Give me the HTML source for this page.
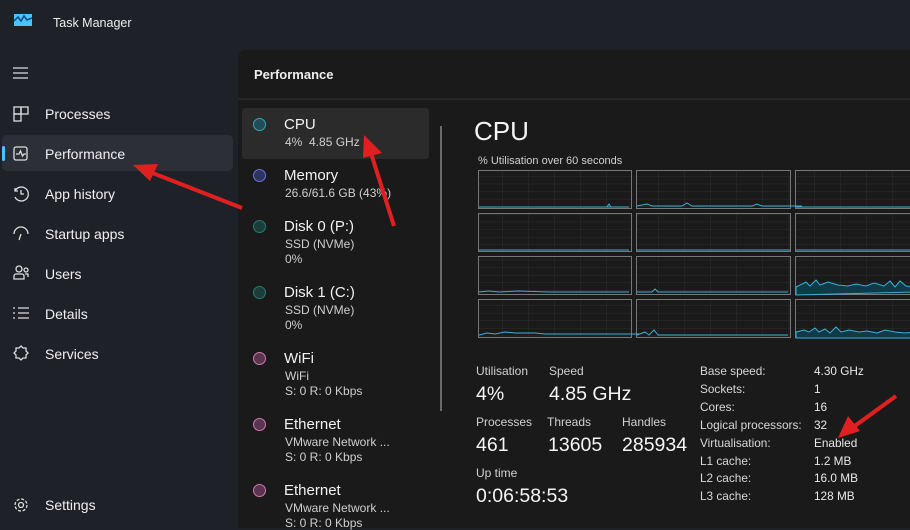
<!DOCTYPE html>
<html><head><meta charset="utf-8"><style>
*{margin:0;padding:0;box-sizing:border-box}
body{width:910px;height:528px;overflow:hidden;background:#1f2129;font-family:"Liberation Sans",sans-serif;color:#fff;position:relative}
.a{position:absolute;white-space:nowrap}
.nav{font-size:14px;color:#f0f0f0}
.panel{position:absolute;left:238px;top:50px;width:672px;height:478px;background:#1a1a1a;border-top-left-radius:8px}
.dot{position:absolute;width:13px;height:13px;border-radius:50%;border:1.5px solid}
.t1{font-size:15px;color:#f2f2f2}
.t2{font-size:12px;color:#cfcfcf}
.lbl{font-size:12px;color:#d0d0d0}
.big{font-size:19.5px;color:#f5f5f5}
.r{font-size:11.8px;color:#e8e8e8}
</style></head><body>
<svg class="a" style="left:14px;top:14px" width="18" height="12"><rect width="18" height="12" fill="#4cc2ff"/><path d="M0 7 L4 3 L7 7 L10 2 L13 6 L18 4" stroke="#0a4a80" stroke-width="1.5" fill="none"/></svg>
<div class="a" style="left:53px;top:16px;font-size:12.5px;color:#eee">Task Manager</div>
<svg class="a" style="left:13px;top:67px" width="16" height="12"><path d="M0 1h15M0 6h15M0 11h15" stroke="#ddd" stroke-width="1.2"/></svg>
<div class="a" style="left:2px;top:135px;width:231px;height:36px;background:#2d2f38;border-radius:5px"></div>
<div class="a" style="left:2px;top:146px;width:3px;height:15px;background:#4cc2ff;border-radius:2px"></div>
<svg class="a" style="left:13px;top:106px" width="17" height="17" fill="none" stroke="#ddd" stroke-width="1.3"><rect x="1" y="1" width="7" height="7"/><rect x="8" y="1" width="7" height="7"/><rect x="1" y="8" width="7" height="7"/></svg>
<div class="a nav" style="left:45px;top:106px">Processes</div>
<svg class="a" style="left:13px;top:146px" width="16" height="16" fill="none" stroke="#ddd" stroke-width="1.3"><rect x="1" y="1" width="13" height="13" rx="2"/><path d="M3 8h3l1.5-3 2 5 1.5-2h2"/></svg>
<div class="a nav" style="left:45px;top:146px">Performance</div>
<svg class="a" style="left:13px;top:186px" width="16" height="16" fill="none" stroke="#ddd" stroke-width="1.3"><path d="M2 5a7 7 0 1 1 0 6"/><path d="M2 2v3h3M8 4v4h3"/></svg>
<div class="a nav" style="left:45px;top:186px">App history</div>
<svg class="a" style="left:13px;top:226px" width="16" height="16" fill="none" stroke="#ddd" stroke-width="1.3"><path d="M1 8a7 7 0 0 1 14 0M8 8l-2 6"/></svg>
<div class="a nav" style="left:45px;top:226px">Startup apps</div>
<svg class="a" style="left:13px;top:265px" width="17" height="16" fill="none" stroke="#ddd" stroke-width="1.3"><circle cx="6" cy="4" r="3"/><circle cx="13" cy="5" r="2"/><path d="M1 14v-3a2 2 0 0 1 2-2h6a2 2 0 0 1 2 2v3zM12 9h3v3"/></svg>
<div class="a nav" style="left:45px;top:266px">Users</div>
<svg class="a" style="left:13px;top:306px" width="16" height="14" fill="none" stroke="#ddd" stroke-width="1.3"><path d="M0 2h2M5 2h11M0 7h2M5 7h11M0 12h2M5 12h11"/></svg>
<div class="a nav" style="left:45px;top:306px">Details</div>
<svg class="a" style="left:13px;top:345px" width="17" height="17" fill="none" stroke="#ddd" stroke-width="1.3"><path d="M8 1l2 2 3 0 0 3 2 2-2 2 0 3-3 0-2 2-2-2-3 0 0-3-2-2 2-2 0-3 3 0z"/></svg>
<div class="a nav" style="left:45px;top:346px">Services</div>
<svg class="a" style="left:13px;top:497px" width="16" height="16" fill="none" stroke="#ddd" stroke-width="1.3"><circle cx="8" cy="8" r="2.5"/><circle cx="8" cy="8" r="6" stroke-dasharray="3 1.7"/></svg>
<div class="a nav" style="left:45px;top:497px">Settings</div>

<div class="panel"></div>
<div class="a" style="left:238px;top:98px;width:672px;height:2px;background:#262626"></div>
<div class="a" style="left:254px;top:67px;font-size:13px;font-weight:bold;color:#eee">Performance</div>
<div class="a" style="left:242px;top:108px;width:187px;height:51px;background:#2b2b2b;border-radius:3px"></div>
<div class="a" style="left:440px;top:126px;width:2px;height:285px;background:#6a6a6a"></div>

<div class="dot" style="left:253px;top:118px;border-color:#3aa3b8;background:#1e4e58"></div>
<div class="a t1" style="left:284px;top:116px">CPU</div><div class="a t2" style="left:285px;top:135px">4%&nbsp; 4.85 GHz</div>
<div class="dot" style="left:253px;top:169px;border-color:#6b74d8;background:#2f3360"></div>
<div class="a t1" style="left:284px;top:167px">Memory</div><div class="a t2" style="left:285px;top:186px">26.6/61.6 GB (43%)</div>
<div class="dot" style="left:253px;top:220px;border-color:#2a7a70;background:#1b3d3a"></div>
<div class="a t1" style="left:284px;top:218px">Disk 0 (P:)</div><div class="a t2" style="left:285px;top:237px">SSD (NVMe)</div><div class="a t2" style="left:285px;top:252px">0%</div>
<div class="dot" style="left:253px;top:286px;border-color:#2a7a70;background:#1b3d3a"></div>
<div class="a t1" style="left:284px;top:284px">Disk 1 (C:)</div><div class="a t2" style="left:285px;top:303px">SSD (NVMe)</div><div class="a t2" style="left:285px;top:318px">0%</div>
<div class="dot" style="left:253px;top:352px;border-color:#d078b0;background:#5a3550"></div>
<div class="a t1" style="left:284px;top:350px">WiFi</div><div class="a t2" style="left:285px;top:369px">WiFi</div><div class="a t2" style="left:285px;top:384px">S: 0 R: 0 Kbps</div>
<div class="dot" style="left:253px;top:418px;border-color:#d078b0;background:#5a3550"></div>
<div class="a t1" style="left:284px;top:416px">Ethernet</div><div class="a t2" style="left:285px;top:435px">VMware Network ...</div><div class="a t2" style="left:285px;top:450px">S: 0 R: 0 Kbps</div>
<div class="dot" style="left:253px;top:484px;border-color:#d078b0;background:#5a3550"></div>
<div class="a t1" style="left:284px;top:482px">Ethernet</div><div class="a t2" style="left:285px;top:501px">VMware Network ...</div><div class="a t2" style="left:285px;top:516px">S: 0 R: 0 Kbps</div>

<div class="a" style="left:474px;top:116px;font-size:26px;color:#f5f5f5">CPU</div>
<div class="a" style="left:478px;top:155px;font-size:11px;color:#d0d0d0">% Utilisation over 60 seconds</div>
<svg class="a" style="left:477px;top:169px" width="433" height="170">
<defs><pattern id="g" width="26" height="7.6" patternUnits="userSpaceOnUse"><path d="M26 0V7.6M0 7.6H26" stroke="#2e2e2e" fill="none"/></pattern></defs>
<g stroke="#777" fill="url(#g)" stroke-width="1">
<rect x="1.5" y="1.5" width="153" height="38"/><rect x="159.5" y="1.5" width="154" height="38"/><rect x="318.5" y="1.5" width="120" height="38"/>
<rect x="1.5" y="44.5" width="153" height="38"/><rect x="159.5" y="44.5" width="154" height="38"/><rect x="318.5" y="44.5" width="120" height="38"/>
<rect x="1.5" y="87.5" width="153" height="38"/><rect x="159.5" y="87.5" width="154" height="38"/><rect x="318.5" y="87.5" width="120" height="38"/>
<rect x="1.5" y="130.5" width="153" height="38"/><rect x="159.5" y="130.5" width="154" height="38"/><rect x="318.5" y="130.5" width="120" height="38"/>
</g>
<g stroke="#3ab0d8" fill="none" stroke-width="1">
<path d="M2 38h150M130 38l2-3 2 3"/><path d="M160 37l10-2 5 2 30 0 5-3 5 3 60 0 5-2 5 2h40"/><path d="M319 38h120"/>
<path d="M2 81h150"/><path d="M160 81h153"/><path d="M319 81h120"/>
<path d="M2 123l10-1 10 1 20-1 30 1h80"/><path d="M160 123l15 0 3-3 3 3h130"/>
<path d="M2 166l8-2 8 1 10-2 10 1 20 0 10 1h95"/><path d="M160 166l8-3 4 3 5-5 4 5h130"/>
</g>
<path d="M319 126v-8l10-5 4 4 6-6 4 5 8-3 10 3 10 1 8-2 10 2 8-3 10 3 6-5 5 6 5-6 6 5 8 1v5z" fill="#0f3b48" stroke="#3ab0d8"/>
<path d="M319 169v-6l8-2 5 2 6-4 4 4 6-3 5 4 6-6 5 5 8-2 10 2 8-1 10 2 8-3 10 2 10 1 10-1v6z" fill="#0f3b48" stroke="#3ab0d8"/>
</svg>

<div class="a lbl" style="left:476px;top:364px">Utilisation</div><div class="a lbl" style="left:549px;top:364px">Speed</div>
<div class="a big" style="left:476px;top:383px">4%</div><div class="a big" style="left:549px;top:383px">4.85 GHz</div>
<div class="a lbl" style="left:476px;top:415px">Processes</div><div class="a lbl" style="left:547px;top:415px">Threads</div><div class="a lbl" style="left:622px;top:415px">Handles</div>
<div class="a big" style="left:476px;top:434px">461</div><div class="a big" style="left:548px;top:434px">13605</div><div class="a big" style="left:622px;top:434px">285934</div>
<div class="a lbl" style="left:476px;top:466px">Up time</div>
<div class="a big" style="left:476px;top:485px">0:06:58:53</div>

<div class="a r" style="left:700px;top:363px;line-height:17.9px;color:#d8d8d8">Base speed:<br>Sockets:<br>Cores:<br>Logical processors:<br>Virtualisation:<br>L1 cache:<br>L2 cache:<br>L3 cache:</div>
<div class="a r" style="left:814px;top:363px;line-height:17.9px">4.30 GHz<br>1<br>16<br>32<br>Enabled<br>1.2 MB<br>16.0 MB<br>128 MB</div>

<svg class="a" style="left:0;top:0" width="910" height="528">
<g stroke="#e02020" stroke-width="4" fill="#e02020">
<path d="M242 208L150 172" /><path d="M133 165l25-1-8 17z" stroke="none"/>
<path d="M394 226L370 150"/><path d="M364 135l18 18-19 5z" stroke="none"/>
<path d="M896 396L852 428"/><path d="M838 438l10-22 12 15z" stroke="none"/>
</g></svg>
</body></html>
